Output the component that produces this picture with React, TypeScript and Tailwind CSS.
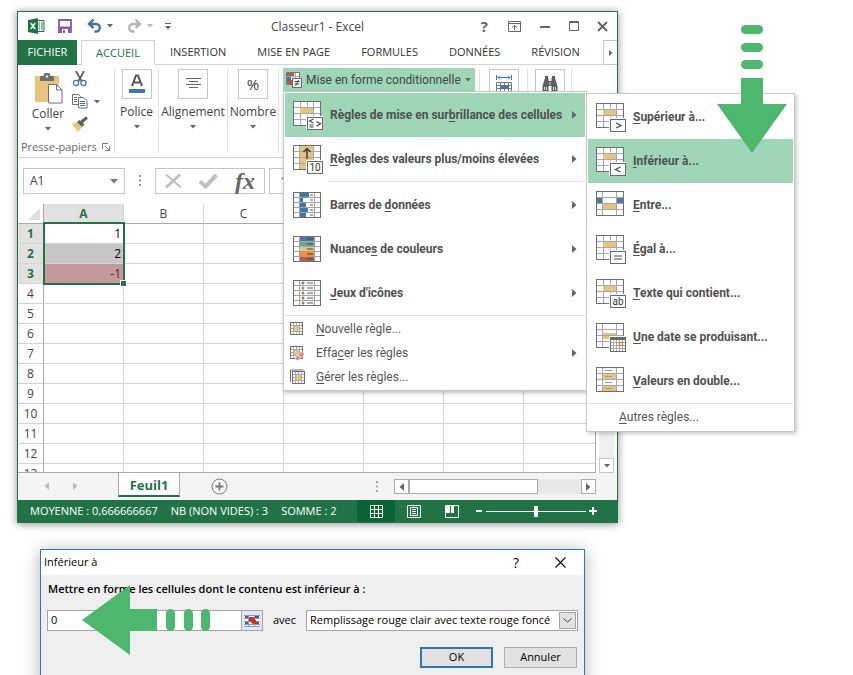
import type { ReactNode } from 'react';

const ROWS = [1, 2, 3, 4, 5, 6, 7, 8, 9, 10, 11, 12, 13];
const COLS = ['A', 'B', 'C', 'D', 'E', 'F', 'G'];
const VALUES: Record<number, string> = { 1: '1', 2: '2', 3: '-1' };

type Entry = { pre?: string; hot: string; post: string; icon: ReactNode; arrow?: boolean; active?: boolean };

/* ---------- small glyphs ---------- */

function Caret({ className = 'text-[#666]' }: { className?: string }) {
  return (
    <svg width="6" height="4" viewBox="0 0 6 4" className={`shrink-0 ${className}`} aria-hidden="true">
      <path d="M0 0h6L3 3.5z" fill="currentColor" />
    </svg>
  );
}

function Triangle({ left, className = 'text-[#666]' }: { left?: boolean; className?: string }) {
  return (
    <svg width="5" height="8" viewBox="0 0 5 8" className={`shrink-0 ${className}`} aria-hidden="true">
      <path d={left ? 'M5 0v8L0.5 4z' : 'M0 0v8L4.5 4z'} fill="currentColor" />
    </svg>
  );
}

/* ---------- menu icons ---------- */

function Badge({ children }: { children?: ReactNode }) {
  return (
    <>
      <rect x="13" y="16" width="17" height="14" fill="#fff" />
      <rect x="14.5" y="17.5" width="15" height="12" fill="#fff" stroke="#6a6a6a" />
      <g fill="none" stroke="#444" strokeWidth="1.2">{children}</g>
    </>
  );
}

function CellsIcon({ children, fill, wide }: { children?: ReactNode; fill?: ReactNode; wide?: boolean }) {
  return (
    <svg width="30" height="30" viewBox="0 0 30 30" className="shrink-0" aria-hidden="true">
      <rect x="0.5" y="1.5" width="27" height="24" fill="#fff" />
      {fill ?? <rect x="7" y="7" width="14" height="7" fill="#e6c47f" />}
      <path
        d={wide ? 'M6.5 1.5v24M20.5 1.5v24M.5 7.5h27M.5 13.5h27M.5 19.5h27' : 'M7.5 1.5v6M7.5 13.5v12M14.5 1.5v5M14.5 14.5v11M20.5 1.5v24M.5 7.5h27M.5 13.5h27M.5 19.5h27'}
        stroke="#a3a8ae"
        fill="none"
      />
      <rect x="0.5" y="1.5" width="27" height="24" fill="none" stroke="#6f6f6f" />
      {children}
    </svg>
  );
}

function FiveRowIcon({ children }: { children: ReactNode }) {
  return (
    <svg width="30" height="30" viewBox="0 0 30 30" className="shrink-0" aria-hidden="true">
      <rect x="0.5" y="2.5" width="27" height="25" fill="#fff" />
      {children}
      <path d="M6.5 2.5v25M21.5 2.5v25M.5 7.5h27M.5 12.5h27M.5 17.5h27M.5 22.5h27" stroke="#a3a3a3" fill="none" />
      <rect x="0.5" y="2.5" width="27" height="25" fill="none" stroke="#6f6f6f" />
    </svg>
  );
}

const highlightIcon = (
  <CellsIcon>
    <Badge>
      <path d="M20.500 19l-4 2 4 2M16.500 25h4M16.500 27h4M23.500 21.500l4 2.200-4 2.200" strokeWidth="1.100" />
    </Badge>
  </CellsIcon>
);

const topIcon = (
  <CellsIcon wide fill={<rect x="7" y="2" width="14" height="23" fill="#e6c47f" />}>
    <path d="M14 15V4M10.500 8L14 4.500 17.500 8" fill="none" stroke="#444" strokeWidth="1.500" />
    <Badge />
    <text x="22" y="27" fontSize="10" textAnchor="middle" fill="#333" className="font-normal">10</text>
  </CellsIcon>
);

const barsIcon = (
  <FiveRowIcon>
    {[9, 3, 6, 8, 6].map((w, i) => (
      <g key={i}>
        <rect x="7" y={3 + i * 5} width={w} height="4" fill="#3c78b4" />
        <path d={`M17 ${5 + i * 5}h3`} stroke="#555" />
      </g>
    ))}
  </FiveRowIcon>
);

const scaleIcon = (
  <FiveRowIcon>
    {['#447aad', '#6aa38f', '#e6c47f', '#f0913a', '#c8573d'].map((c, i) => (
      <g key={c}>
        <rect x="7" y={2.5 + i * 5} width="15" height="5" fill={c} />
        <path d={`M14 ${5 + i * 5}h6`} stroke="#444" />
      </g>
    ))}
  </FiveRowIcon>
);

const setIcon = (
  <FiveRowIcon>
    {['#4f9a7c', '#e0762e', '#4f9a7c', '#d9632e', '#4f9a7c'].map((c, i) => (
      <g key={i}>
        <circle cx="10" cy={5 + i * 5} r="1.5" fill={c} />
        <path d={`M14 ${5 + i * 5}h6`} stroke="#555" />
      </g>
    ))}
  </FiveRowIcon>
);

function RuleIcon({ eraser, stack }: { eraser?: boolean; stack?: boolean }) {
  return (
    <svg width="16" height="16" viewBox="0 0 16 16" className="shrink-0" aria-hidden="true">
      {stack && <path d="M.5 13V1h13" fill="none" stroke="#6f6f6f" />}
      <g transform={stack ? 'translate(2 2)' : 'translate(0 1)'}>
        <rect x="0.5" y="0.5" width="12" height="12" fill="#fff" stroke="#6f6f6f" />
        <path d="M3.500 1v11M9.500 1v11M1 3.500h11M1 9.500h11M6.500 1v2M6.500 10v2M1 6.500h2M10 6.500h2" stroke="#aaa" />
        <rect x="4" y="4" width="5" height="5" fill="#e6c47f" />
      </g>
      {eraser && (
        <>
          <path d="M5 12.500l6.500-6 3.500 2.500-7 6.500h-2z" fill="#df8b93" stroke="#fff" strokeWidth="0.600" />
          <path d="M7.500 9.500l2.500 3" stroke="#fff" />
        </>
      )}
    </svg>
  );
}

const betweenIcon = (
  <CellsIcon
    wide
    fill={
      <>
        <rect x="1" y="8" width="6" height="6" fill="#4a78a8" />
        <rect x="21" y="8" width="6" height="6" fill="#4a78a8" />
        <rect x="7" y="13" width="14" height="7" fill="#e6c47f" />
      </>
    }
  />
);

const dateIcon = (
  <CellsIcon wide fill={<rect x="6" y="11" width="14" height="6" fill="#e6c47f" />}>
    <rect x="13" y="14" width="17" height="16" fill="#fff" />
    <rect x="14.500" y="15.500" width="15" height="14" fill="#fff" stroke="#6a6a6a" />
    <rect x="14" y="15" width="16" height="3" fill="#6a6a6a" />
    <path d="M17.500 18v11M20.500 18v11M23.500 18v11M26.500 18v11M15 20.500h14M15 23.500h14M15 26.500h14" stroke="#aaa" />
    <rect x="23.500" y="20.500" width="3" height="3" fill="#fff" stroke="#d9732e" />
  </CellsIcon>
);

const doubleIcon = (
  <CellsIcon
    wide
    fill={
      <>
        <rect x="7" y="7" width="14" height="7" fill="#e6c47f" />
        <rect x="7" y="19" width="14" height="6" fill="#e6c47f" />
      </>
    }
  >
    <path d="M9 4.500h7M9 10.500h7M9 16.500h7M9 22.500h7" stroke="#999" />
  </CellsIcon>
);

const MAIN_MENU: Entry[][] = [
  [
    { pre: 'Règles de mise en sur', hot: 'b', post: 'rillance des cellules', icon: highlightIcon, arrow: true, active: true },
    { hot: 'R', post: 'ègles des valeurs plus/moins élevées', icon: topIcon, arrow: true },
  ],
  [
    { pre: 'Barres de ', hot: 'd', post: 'onnées', icon: barsIcon, arrow: true },
    { pre: 'Nuance', hot: 's', post: ' de couleurs', icon: scaleIcon, arrow: true },
    { hot: 'J', post: "eux d'icônes", icon: setIcon, arrow: true },
  ],
];

const SMALL_MENU: Entry[] = [
  { hot: 'N', post: 'ouvelle règle...', icon: <RuleIcon /> },
  { pre: 'Effa', hot: 'c', post: 'er les règles', icon: <RuleIcon eraser />, arrow: true },
  { hot: 'G', post: 'érer les règles...', icon: <RuleIcon stack /> },
];

const SUB_MENU: Entry[] = [
  { hot: 'S', post: 'upérieur à...', icon: <CellsIcon><Badge><path d="M20 21l5 2.500-5 2.500" /></Badge></CellsIcon> },
  { hot: 'I', post: 'nférieur à...', icon: <CellsIcon><Badge><path d="M24.500 21l-5 2.500 5 2.500" /></Badge></CellsIcon>, active: true },
  { hot: 'E', post: 'ntre...', icon: betweenIcon },
  { hot: 'É', post: 'gal à...', icon: <CellsIcon><Badge><path d="M18 22h8M18 25h8" /></Badge></CellsIcon> },
  {
    hot: 'T',
    post: 'exte qui contient...',
    icon: (
      <CellsIcon>
        <Badge />
        <text x="22" y="27" fontSize="10" textAnchor="middle" fill="#333" className="font-normal">ab</text>
      </CellsIcon>
    ),
  },
  { hot: 'U', post: 'ne date se produisant...', icon: dateIcon },
  { hot: 'V', post: 'aleurs en double...', icon: doubleIcon },
];

function Label({ entry }: { entry: Entry }) {
  return (
    <span className="flex-1 whitespace-nowrap text-left">
      {entry.pre}
      <u className="underline-offset-2">{entry.hot}</u>
      {entry.post}
    </span>
  );
}

function BigItem({ entry }: { entry: Entry }) {
  return (
    <button
      className={`flex h-11 w-full items-center gap-[7px] pl-2 pr-2 text-[12px] font-bold text-[#505050] ${entry.active ? 'bg-[#9fd6b7]' : ''}`}
    >
      {entry.icon}
      <Label entry={entry} />
      {entry.arrow && <Triangle />}
    </button>
  );
}

function SubMenu() {
  return (
    <div className="absolute left-full top-px w-[209px] border border-[#c6c6c6] bg-white p-px shadow-[2px_2px_4px_rgba(0,0,0,0.2)]">
      {SUB_MENU.map((entry) => (
        <BigItem key={entry.hot} entry={entry} />
      ))}
      <div className="border-t border-[#e1e1e1]" />
      <button className="block h-[26px] w-full pl-[31px] text-left text-[12px] text-[#555]">
        <u className="underline-offset-2">A</u>utres règles...
      </button>
      <svg width="70" height="128" viewBox="0 0 70 128" className="absolute -top-[69px] right-[7px] text-[#4eb76e]" aria-hidden="true">
        <g fill="currentColor">
          <rect x="24" y="0" width="22" height="9" rx="4.500" />
          <rect x="24" y="18" width="22" height="9" rx="4.500" />
          <rect x="24" y="35" width="22" height="9" rx="4.500" />
          <path d="M24 53h22v26h24L35 128 0 79h24z" />
        </g>
      </svg>
    </div>
  );
}

function ConditionalMenu() {
  return (
    <div className="absolute left-0 top-[23px] z-10 w-[304px] border border-[#c6c6c6] bg-white p-px shadow-[1px_2px_4px_rgba(0,0,0,0.25)]">
      {MAIN_MENU[0].map((entry) => (
        <BigItem key={entry.post} entry={entry} />
      ))}
      <div className="mb-px ml-11 border-t border-[#e1e1e1]" />
      {MAIN_MENU[1].map((entry) => (
        <BigItem key={entry.post} entry={entry} />
      ))}
      <div className="mb-px border-t border-[#e1e1e1]" />
      {SMALL_MENU.map((entry) => (
        <button key={entry.hot} className="flex h-6 w-full items-center gap-[10px] pl-[5px] pr-2 text-[12px] text-[#555]">
          {entry.icon}
          <Label entry={entry} />
          {entry.arrow && <Triangle />}
        </button>
      ))}
      <SubMenu />
    </div>
  );
}

/* ---------- window chrome ---------- */

function TitleBar() {
  return (
    <header className="relative flex h-7 items-center justify-between pl-[10px] pr-[9px]">
      <div className="flex items-center">
        <svg width="17" height="16" viewBox="0 0 17 16" aria-hidden="true">
          <path d="M9 2.500h7v11H9z" fill="#fff" stroke="#217346" />
          <path d="M10.500 5h1.500M13 5h2M10.500 7h1.500M13 7h2M10.500 9h1.500M13 9h2M10.500 11h1.500M13 11h2" stroke="#217346" />
          <path d="M0 2l10-2v16L0 14z" fill="#217346" />
          <path d="M2.800 5l4.400 6M7.200 5l-4.400 6" stroke="#fff" strokeWidth="1.500" />
        </svg>
        <button aria-label="Enregistrer" className="ml-[13px]">
          <svg width="14" height="14" viewBox="0 0 14 14">
            <path d="M1 1h12v12H1z" fill="#fff" stroke="#8a5ba8" strokeWidth="1.800" />
            <path d="M1 7.500h12V13H1z" fill="#8a5ba8" />
            <path d="M4 10h6v4H4z" fill="#fff" />
            <path d="M5 11h2v3H5z" fill="#8a5ba8" />
          </svg>
        </button>
        <button aria-label="Annuler la frappe" className="ml-[15px] flex items-center gap-[5px]">
          <svg width="15" height="14" viewBox="0 0 15 14" fill="none" stroke="#3d74b0" strokeWidth="2.400">
            <path d="M6.500 0.500L2 5l4.500 4M2 5h7c5 0 5 7.500 0 7.500H7.500" />
          </svg>
          <Caret />
        </button>
        <button aria-label="Rétablir" className="ml-[14px] flex items-center gap-[5px]">
          <svg width="15" height="14" viewBox="0 0 15 14" fill="none" stroke="#b5b5b5" strokeWidth="2.400">
            <path d="M8.500 0.500L13 5l-4.500 4M13 5H6c-5 0-5 7.500 0 7.500h1.500" />
          </svg>
          <Caret className="text-[#b5b5b5]" />
        </button>
        <button aria-label="Personnaliser" className="ml-3">
          <svg width="6" height="7" viewBox="0 0 6 7">
            <path d="M0 .5h6" stroke="#666" />
            <path d="M0 3h6L3 6.500z" fill="#666" />
          </svg>
        </button>
      </div>
      <h1 className="absolute inset-x-0 mx-auto w-fit pt-[2px] text-[12px] text-[#444]">Classeur1 - Excel</h1>
      <div className="relative flex items-center gap-[18px] text-[#666]">
        <button aria-label="Aide" className="mr-[2px] text-[15px] font-bold leading-none">?</button>
        <button aria-label="Options du ruban" className="mr-px">
          <svg width="13" height="11" viewBox="0 0 13 11" fill="none" stroke="currentColor">
            <path d="M.5.500h12v10H.5zM.5 2.500h12M6.500 9V4.500M4 6.500l2.500-2 2.500 2" />
          </svg>
        </button>
        <button aria-label="Réduire" className="mr-px">
          <svg width="10" height="10" viewBox="0 0 10 10"><path d="M0 6h10" stroke="currentColor" strokeWidth="2" /></svg>
        </button>
        <button aria-label="Agrandir">
          <svg width="10" height="10" viewBox="0 0 10 10" fill="none" stroke="currentColor"><path d="M.5.500h9v9h-9zM0 1.500h10" /></svg>
        </button>
        <button aria-label="Fermer">
          <svg width="11" height="11" viewBox="0 0 11 11"><path d="M1 1l9 9M10 1l-9 9" stroke="currentColor" strokeWidth="2" /></svg>
        </button>
      </div>
    </header>
  );
}

function RibbonTabs() {
  return (
    <nav className="flex h-[25px] whitespace-nowrap text-[11px] text-[#333]">
      <button className="w-[59px] shrink-0 bg-[#217346] text-white">FICHIER</button>
      <span className="w-1 shrink-0 border-b border-[#d4d4d4]" />
      <button className="w-[74px] shrink-0 border border-b-0 border-[#d4d4d4] text-[#217346]">ACCUEIL</button>
      {['INSERTION', 'MISE EN PAGE', 'FORMULES', 'DONNÉES', 'RÉVISION'].map((tab) => (
        <button key={tab} className="border-b border-[#d4d4d4] pl-[15px] pr-4">{tab}</button>
      ))}
      <span className="flex-1 border-b border-[#d4d4d4]" />
      <button aria-label="Onglets suivants" className="grid w-[14px] shrink-0 place-items-center border border-r-0 border-[#c6c6c6]">
        <svg width="4" height="6" viewBox="0 0 4 6"><path d="M0 0v6l3.500-3z" fill="#666" /></svg>
      </button>
    </nav>
  );
}

function RibbonGroup({ label, children, className }: { label?: string; children: ReactNode; className: string }) {
  return (
    <button className={`flex flex-col items-center border-r border-[#e1e1e1] text-[12px] text-[#444] ${className}`}>
      <span className="grid size-[30px] place-items-center border border-[#c6c6c6]">{children}</span>
      {label && <span className="mt-1 whitespace-nowrap leading-[18px]">{label}</span>}
      {label && <span className="mt-1 flex"><Caret /></span>}
    </button>
  );
}

function Clipboard() {
  return (
    <div className="flex w-[97px] flex-col border-r border-[#e1e1e1] text-[12px] text-[#444]">
      <div className="flex flex-1">
        <button className="ml-[14px] flex w-8 flex-col items-center pt-1">
          <svg width="29" height="31" viewBox="0 0 29 31" className="shrink-0" aria-hidden="true">
            <path d="M1 3h24v26H1z" fill="#e8c57f" />
            <path d="M6 3h3.500a3.500 3.500 0 0 1 7 0H20v5H6z" fill="#6f6f6f" />
            <circle cx="13" cy="3.500" r="1.200" fill="#fff" />
            <path d="M14.500 11.500h8l5.500 5.500v13H14.500z" fill="#fff" stroke="#6f6f6f" />
            <path d="M22.500 11.500V17H28" fill="none" stroke="#6f6f6f" />
          </svg>
          <span className="mt-px leading-[18px]">Coller</span>
          <span className="mt-1 flex"><Caret /></span>
        </button>
        <div className="ml-2 flex flex-col items-start gap-[7px] pt-[2px]">
          <button aria-label="Couper">
            <svg width="16" height="16" viewBox="0 0 16 16" fill="none">
              <path d="M4 0l5.500 10M12 0L6.500 10" stroke="#5f5f5f" strokeWidth="1.800" />
              <circle cx="4" cy="12" r="2.600" stroke="#4677a8" strokeWidth="1.300" />
              <circle cx="11.500" cy="12" r="2.600" stroke="#4677a8" strokeWidth="1.300" />
            </svg>
          </button>
          <button aria-label="Copier" className="flex items-center gap-[6px]">
            <svg width="16" height="15" viewBox="0 0 16 15" fill="#fff" stroke="#6f6f6f">
              <path d="M.5.500h6l2 2v8h-8z" />
              <path d="M2 3.500h3M2 5.500h3M2 7.500h3" stroke="#4677a8" />
              <path d="M6.500 3.500h5l3.500 3v7.500H6.500z" />
              <path d="M8 7.500h5M8 9.500h5M8 11.500h5" stroke="#4677a8" />
            </svg>
            <Caret />
          </button>
          <button aria-label="Reproduire la mise en forme">
            <svg width="17" height="16" viewBox="0 0 17 16">
              <path d="M0 8l5-2 5 5-4 5z" fill="#e8c57f" />
              <path d="M5 6l2.500-2 5 4.500L10 11z" fill="#5f5f5f" />
              <path d="M9.500 6L15 1.500" stroke="#5f5f5f" strokeWidth="3" />
            </svg>
          </button>
        </div>
      </div>
      <div className="flex h-3 items-center justify-between whitespace-nowrap pl-[3px] pr-1 text-[11px] leading-3 text-[#666]">
        Presse-papiers
        <svg width="8" height="8" viewBox="0 0 8 8" fill="none" stroke="#777" className="shrink-0" aria-hidden="true">
          <path d="M.5 6V.5H6M3 3l4 4M7.500 3.500v4h-4" />
        </svg>
      </div>
    </div>
  );
}

function Ribbon() {
  return (
    <section className="border-b border-[#d4d4d4] py-1">
      <div className="flex h-[84px]">
        <Clipboard />
        <RibbonGroup label="Police" className="w-11">
          <svg width="16" height="20" viewBox="0 0 16 20">
            <path d="M3 12L7 1.500h2L13 12M4.500 8.500h7" fill="none" stroke="#555" strokeWidth="2" />
            <rect x="0" y="15" width="16" height="4" fill="#3f76b0" />
          </svg>
        </RibbonGroup>
        <RibbonGroup label="Alignement" className="w-[69px]">
          <svg width="15" height="12" viewBox="0 0 15 12">
            <path d="M0 .5h15M3 3.500h9M0 6.500h15M3 9.500h9" stroke="#666" />
          </svg>
        </RibbonGroup>
        <RibbonGroup label="Nombre" className="w-[51px]">
          <span className="text-[15px]">%</span>
        </RibbonGroup>
        <div className="relative w-[201px] border-r border-[#e1e1e1] pl-1">
          <div className="relative -mt-px font-['Roboto',sans-serif]">
            <button className="flex h-6 w-48 items-center gap-1 whitespace-nowrap bg-[#9fd6b7] pl-[3px] text-[12px] text-[#444]">
              <svg width="16" height="16" viewBox="0 0 16 16" className="shrink-0" aria-hidden="true">
                <path d="M.5.500h13v12H.5z" fill="#fff" stroke="#777" />
                <path d="M1 1h7v3H1z" fill="#b9573f" />
                <path d="M1 4h4v4H1z" fill="#3f76b0" />
                <path d="M1 8h5v4H1z" fill="#b9573f" />
                <path d="M9.500 1v5M1 4.500h12" stroke="#aaa" />
                <path d="M6.500 6.500h9v9h-9z" fill="#fff" stroke="#666" />
                <path d="M8.500 9.500h5M8.500 12h5M12.500 8l-3 6" stroke="#444" />
              </svg>
              <span>Mise en forme conditionnelle</span>
              <Caret />
            </button>
            <ConditionalMenu />
          </div>
        </div>
        <RibbonGroup className="w-12">
          <svg width="16" height="18" viewBox="0 0 16 18">
            <path d="M.5 0v5M15.500 0v5M2 2.500h12M4 .5l-2 2 2 2M12 .5l2 2-2 2" fill="none" stroke="#3f76b0" />
            <path d="M.5 7.500h15v10H.5zM4.500 7.500v10M8.500 7.500v10M12.500 7.500v10M.5 10.500h15M.5 13.500h15" fill="#fff" stroke="#777" />
            <rect x="5" y="11" width="7" height="3" fill="#3f76b0" />
          </svg>
        </RibbonGroup>
        <RibbonGroup className="w-11">
          <svg width="16" height="16" viewBox="0 0 16 16" fill="#5f5f5f">
            <path d="M3 2h3.500v3H9.500V2H13l2.500 8v5H9.500v-5h-3v5H.5v-5z" />
            <path d="M3 0h3v2H3zM10 0h3v2h-3z" />
            <path d="M2.500 11v3M4.500 11v3M11.500 11v3M13.500 11v3M8 6v3" stroke="#fff" strokeWidth="0.800" />
          </svg>
        </RibbonGroup>
      </div>
    </section>
  );
}

function FormulaBar() {
  return (
    <div className="flex h-[46px] items-start px-[5px] pt-[10px] text-[12px] text-[#444]">
      <div className="flex h-[26px] w-[102px] items-center border border-[#c6c6c6] pr-[6px]">
        <input aria-label="Zone de nom" defaultValue="A1" className="w-full min-w-0 pl-[6px] outline-none" />
        <svg width="8" height="5" viewBox="0 0 8 5" className="shrink-0" aria-hidden="true"><path d="M0 0h8L4 4.500z" fill="#777" /></svg>
      </div>
      <svg width="3" height="12" viewBox="0 0 3 12" className="ml-[14px] mt-[7px]" aria-hidden="true">
        <path d="M0 1h2M0 5.500h2M0 10h2" stroke="#999" strokeWidth="2" />
      </svg>
      <div className="ml-[13px] flex h-[26px] w-[110px] items-center justify-between border border-[#c6c6c6] px-[9px]">
        <button aria-label="Annuler la saisie">
          <svg width="17" height="16" viewBox="0 0 17 16" fill="none" stroke="#c0c0c0"><path d="M1 1.500l15 13" strokeWidth="2" /><path d="M15 1.500L1 14.500" strokeWidth="3" /></svg>
        </button>
        <button aria-label="Valider la saisie">
          <svg width="19" height="16" viewBox="0 0 19 16" fill="none" stroke="#c0c0c0" strokeWidth="4"><path d="M1 8.500l5.500 5L17.500 2" /></svg>
        </button>
        <button aria-label="Insérer une fonction" className="font-['Liberation_Serif',serif] text-[24px] font-bold italic leading-[22px] text-[#666]">fx</button>
      </div>
      <input aria-label="Barre de formule" defaultValue="1" className="ml-1 h-[26px] min-w-0 flex-1 border border-[#c6c6c6] pl-[10px] outline-none" />
    </div>
  );
}

function Grid() {
  return (
    <div className="relative h-[269px] min-w-0 flex-1 overflow-hidden border-b border-r border-[#ababab]">
      <table className="w-full table-fixed border-separate border-spacing-0 text-[12px] text-[#444]">
        <thead>
          <tr className="h-5">
            <th className="w-[26px] border-b border-r border-[#ababab] p-0">
              <svg width="12" height="12" viewBox="0 0 12 12" className="ml-auto mr-[3px]" aria-hidden="true"><path d="M12 0v12H0z" fill="#dedede" /></svg>
            </th>
            {COLS.map((c) => (
              <th
                key={c}
                className={`border-b border-r border-b-[#ababab] border-r-[#d4d4d4] p-0 leading-[19px] last:w-[72px] last:border-r-0 ${c === 'A' ? 'w-20 bg-[#e1e1e1] font-bold text-[#217346]' : 'w-20 font-normal'}`}
              >
                {c}
              </th>
            ))}
          </tr>
        </thead>
        <tbody>
          {ROWS.map((r) => (
            <tr key={r} className="h-5">
              <th className={`h-5 border-b border-r border-b-[#d4d4d4] border-r-[#ababab] p-0 pt-px leading-[18px] ${r <= 3 ? 'bg-[#e1e1e1] font-bold text-[#217346]' : 'font-normal'}`}>
                {r}
              </th>
              {COLS.map((c) => (
                <td
                  key={c}
                  className={`h-5 border-b border-r border-[#d4d4d4] p-0 pr-[2px] pt-px text-right leading-[18px] last:border-r-0 ${c !== 'A' ? '' : r === 2 ? 'bg-[#c6c6c6] text-black' : r === 3 ? 'bg-[#c5989c] text-[#7a0a14]' : 'text-black'}`}
                >
                  {c === 'A' ? VALUES[r] : ''}
                </td>
              ))}
            </tr>
          ))}
        </tbody>
      </table>
      <div className="absolute left-[25px] top-[18px] h-[63px] w-[82px] border-2 border-[#217346]">
        <span className="absolute -bottom-[4px] -right-[4px] size-[7px] border border-white bg-[#217346]" />
      </div>
    </div>
  );
}

function SheetBar() {
  return (
    <div className="flex h-[27px] items-start bg-[#f4f4f4] pr-[21px]">
      <button aria-label="Feuille précédente" className="ml-[26px] mt-[9px]"><Triangle left className="text-[#bbb]" /></button>
      <button aria-label="Feuille suivante" className="ml-[24px] mt-[9px]"><Triangle className="text-[#bbb]" /></button>
      <button className="ml-[40px] h-6 w-[62px] border-x border-b-2 border-x-[#ababab] border-b-[#217346] bg-white pt-px text-[13px] font-bold leading-[18px] text-[#217346]">Feuil1</button>
      <button aria-label="Nouvelle feuille" className="ml-[31px] mt-[5px]">
        <svg width="17" height="17" viewBox="0 0 17 17" fill="none" stroke="#777">
          <circle cx="8.500" cy="8.500" r="7.500" />
          <path d="M8.500 4.500v8M4.500 8.500h8" strokeWidth="1.800" />
        </svg>
      </button>
      <span className="flex-1" />
      <svg width="2" height="12" viewBox="0 0 2 12" className="mr-4 mt-2" aria-hidden="true">
        <path d="M0 1h2M0 5.500h2M0 10h2" stroke="#aaa" strokeWidth="2" />
      </svg>
      <div className="mt-[6px] flex h-[15px] w-[202px] bg-[#e8e8e8]">
        <button aria-label="Défiler à gauche" className="grid w-[15px] place-items-center border border-[#ababab] bg-white"><Triangle left /></button>
        <div className="w-[129px] border border-[#ababab] bg-white" />
        <button aria-label="Défiler à droite" className="ml-auto grid w-[15px] place-items-center border border-[#ababab] bg-white"><Triangle /></button>
      </div>
    </div>
  );
}

function StatusBar() {
  return (
    <footer className="flex h-[22px] items-center whitespace-nowrap bg-[#217346] pl-3 pr-5 text-[11px] text-white">
      <span>MOYENNE : 0,666666667</span>
      <span className="ml-[13px]">NB (NON VIDES) : 3</span>
      <span className="ml-[13px]">SOMME : 2</span>
      <span className="flex-1" />
      <button aria-label="Normal" className="grid h-full w-[38px] place-items-center bg-[#0a6332]">
        <svg width="13" height="13" viewBox="0 0 13 13"><path d="M.5.500h12v12H.5zM4.500 0v13M8.500 0v13M0 4.500h13M0 8.500h13" fill="none" stroke="#fff" /></svg>
      </button>
      <button aria-label="Mise en page" className="grid h-full w-[38px] place-items-center">
        <svg width="14" height="13" viewBox="0 0 14 13"><path d="M.5.500h13v12H.5zM3.500 2.500h7v8h-7zM5 4.500h4M5 6.500h4M5 8.500h4" fill="none" stroke="#fff" /></svg>
      </button>
      <button aria-label="Sauts de page" className="grid h-full w-[38px] place-items-center">
        <svg width="14" height="13" viewBox="0 0 14 13"><path d="M.5.500h13v12H.5z" fill="none" stroke="#fff" /><path d="M1 1h4v7H1zM6 1h3v7H6z" fill="#fff" /></svg>
      </button>
      <button aria-label="Zoom arrière" className="ml-1"><svg width="8" height="8" viewBox="0 0 8 8"><path d="M1 4h6" stroke="#fff" strokeWidth="2" /></svg></button>
      <input
        type="range"
        aria-label="Zoom"
        className="mx-[3px] h-[11px] w-[100px] appearance-none bg-transparent [&::-webkit-slider-runnable-track]:h-px [&::-webkit-slider-runnable-track]:bg-white [&::-webkit-slider-thumb]:-mt-[5px] [&::-webkit-slider-thumb]:h-[11px] [&::-webkit-slider-thumb]:w-1 [&::-webkit-slider-thumb]:appearance-none [&::-webkit-slider-thumb]:bg-white"
      />
      <button aria-label="Zoom avant"><svg width="8" height="8" viewBox="0 0 8 8"><path d="M0 4h8M4 0v8" stroke="#fff" strokeWidth="2" /></svg></button>
    </footer>
  );
}

function RuleDialog() {
  return (
    <form className="relative ml-10 mr-[268px] mt-[26px] border border-[#2f78b0] bg-[#efefef] pb-5 text-[11px] text-black shadow-[0_2px_16px_rgba(0,0,0,0.3)]">
      <div className="flex h-[25px] items-center bg-white pl-[3px] pr-[18px]">
        <h2 className="flex-1">Inférieur à</h2>
        <button type="button" aria-label="Aide" className="text-[14px] leading-none">?</button>
        <button type="button" aria-label="Fermer" className="ml-9">
          <svg width="11" height="11" viewBox="0 0 11 11"><path d="M.5.500l10 10M10.500.500l-10 10" stroke="#000" strokeWidth="1.100" /></svg>
        </button>
      </div>
      <div className="px-[6px] pt-[6px]">
        <label htmlFor="threshold" className="block whitespace-nowrap pl-px font-semibold leading-4">
          Mettre en forme les cellules dont le contenu est inférieur à :
        </label>
        <div className="mt-[13px] flex h-[21px] items-center">
          <div className="flex h-full flex-1">
            <input id="threshold" defaultValue="0" className="min-w-0 flex-1 border border-[#a5a5a5] bg-white pl-[3px] outline-none" />
            <button type="button" aria-label="Sélectionner la plage" className="-ml-px grid w-[22px] place-items-center border border-[#a5a5a5] bg-[#e3e7ee]">
              <svg width="16" height="14" viewBox="0 0 16 14">
                <path d="M0 1h16v12H0z" fill="#fff" />
                <path d="M0 1.500h16M0 4.500h16M0 7.500h16M0 10.500h16M0 12.500h16M4.500 1v12M10.500 1v12" stroke="#7f9bcb" />
                <path d="M1 2h3v2H1zM11 2h4v2h-4zM1 8h3v2H1zM11 8h4v2h-4z" fill="#3b5fa5" />
                <path d="M5 3h5v1.500l2.500 2.500v3H9L5 7z" fill="#d8301f" />
              </svg>
            </button>
          </div>
          <label htmlFor="format" className="px-[10px]">avec</label>
          <div className="relative h-full w-[272px]">
            <select id="format" className="h-full w-full appearance-none border border-[#a5a5a5] bg-white pl-[3px] outline-none">
              <option>Remplissage rouge clair avec texte rouge foncé</option>
            </select>
            <span className="pointer-events-none absolute bottom-[2px] right-[2px] top-[2px] grid w-[17px] place-items-center border border-[#a5a5a5] bg-[#e1e1e1]">
              <svg width="9" height="5" viewBox="0 0 9 5"><path d="M.5.500l4 3.500 4-3.500" fill="none" stroke="#444" /></svg>
            </span>
          </div>
        </div>
        <div className="mt-4 flex justify-end gap-[11px] pr-px">
          <button type="submit" className="h-[21px] w-[73px] border-2 border-[#2a77b5] bg-[#e1e1e1]">OK</button>
          <button type="button" className="h-[21px] w-[73px] border border-[#adadad] bg-[#e1e1e1]">Annuler</button>
        </div>
      </div>
      <svg width="128" height="70" viewBox="0 0 128 70" className="pointer-events-none absolute left-[41px] top-[35px] text-[#4eb76e]" aria-hidden="true">
        <g fill="currentColor">
          <path d="M0 35L48 0v24h27v22H48v24z" />
          <rect x="84" y="24" width="9" height="22" rx="4.500" />
          <rect x="102" y="24" width="9" height="22" rx="4.500" />
          <rect x="119" y="24" width="9" height="22" rx="4.500" />
        </g>
      </svg>
    </form>
  );
}

export default function App() {
  return (
    <div className="h-screen overflow-hidden bg-white pt-[11px] font-['Open_Sans','Noto_Sans',sans-serif]">
      <main className="ml-[17px] mr-[235px] border border-[#217346] bg-white shadow-[0_1px_8px_rgba(0,0,0,0.45)]">
        <TitleBar />
        <RibbonTabs />
        <Ribbon />
        <FormulaBar />
        <div className="flex">
          <Grid />
          <div className="ml-[3px] mr-[3px] flex w-[15px] flex-col justify-end bg-[#f0f0f0]">
            <button aria-label="Défiler vers le bas" className="grid h-[15px] place-items-center border border-[#c6c6c6] bg-white"><Caret /></button>
          </div>
        </div>
        <SheetBar />
        <StatusBar />
      </main>
      <RuleDialog />
    </div>
  );
}
